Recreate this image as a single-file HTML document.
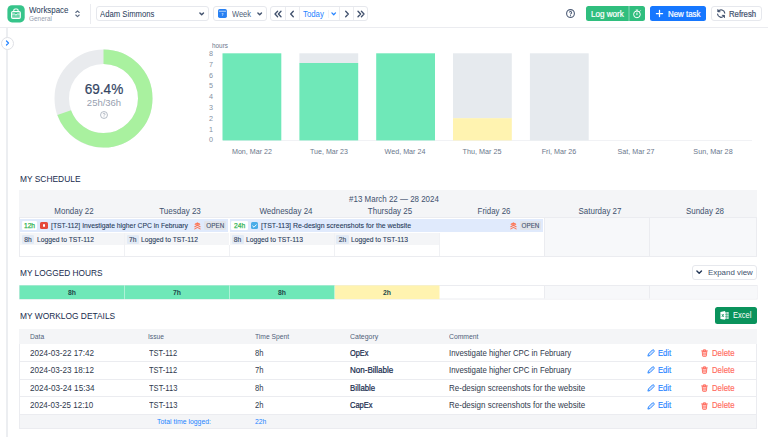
<!DOCTYPE html>
<html>
<head>
<meta charset="utf-8">
<style>
*{box-sizing:border-box;margin:0;padding:0}
html,body{width:768px;height:437px;overflow:hidden;background:#fff}
body{font-family:"Liberation Sans",sans-serif;color:#253858;position:relative;font-size:8px}
.abs{position:absolute}
.t{position:absolute;white-space:nowrap;line-height:1}
.btn{position:absolute;border:1px solid #e6e8ed;border-radius:3px;background:#fff}
.m{-webkit-text-stroke:.2px currentColor}
svg{position:absolute;overflow:visible}
/* header */
#hdr{position:absolute;left:0;top:0;width:768px;height:28px;border-bottom:1px solid #ebecf0;background:#fff}
/* sidebar */
#sideline{position:absolute;left:6px;top:28px;width:2px;height:409px;background:#eceef1}
#toggle{position:absolute;left:0.5px;top:36.5px;width:13px;height:13px;border-radius:50%;background:#fff;border:1px solid #dfe1e6}
.sec{font-size:8.25px;color:#172b4d}
.bar{position:absolute}
.xl{position:absolute;font-size:7.3px;color:#6b778c;white-space:nowrap;line-height:1}
.yl{position:absolute;font-size:7.2px;color:#8590a2;line-height:1;left:208px;width:6px;text-align:center}

.dh{top:206.8px;font-size:8.3px;color:#42526e}
.chip{top:220.8px;height:9.3px;background:#fff;border-radius:1.2px;font-size:6.7px;line-height:9.7px;text-align:center;color:#34b556;-webkit-text-stroke:.25px #34b556}
.tk{top:222.5px;font-size:6.8px;color:#253858;-webkit-text-stroke:.08px #253858}
.open{top:220.8px;height:9.2px;width:21.8px;background:#e1e4ea;border-radius:1.2px;font-size:6.3px;line-height:9.7px;text-align:center;color:#42526e;-webkit-text-stroke:.1px #42526e}
.lg{display:none}
.lh{top:234.5px;width:12.2px;height:9.5px;background:#e2eaf5;border-radius:1.2px;font-size:6.7px;line-height:9.8px;text-align:center;color:#3b4a66;-webkit-text-stroke:.15px #3b4a66}
.lt{top:236.5px;font-size:6.8px;color:#253858;-webkit-text-stroke:.08px #253858}
.lc{top:285.4px;height:14px;font-size:6.8px;line-height:16.2px;text-align:center;color:#1d4a4a;font-weight:bold}
.th{top:334px;font-size:6.9px;color:#505f79}
.td{font-size:8.8px;color:#303a4d}
.b{color:#172b4d;-webkit-text-stroke:.22px #172b4d}
</style>
</head>
<body>
<!-- HEADER -->
<div id="hdr">
  <svg style="left:0;top:0" width="30" height="28" viewBox="0 0 30 28"><rect x="7.4" y="5.2" width="17.3" height="17.2" rx="4.6" fill="#36c48a"/><rect x="11.6" y="14.2" width="8.7" height="4.1" fill="#fff" fill-opacity=".28"/><rect x="11.6" y="11.6" width="8.7" height="6.8" rx="1.2" fill="none" stroke="#fff" stroke-width="1.1"/><path d="M13.8 11.4V10.3a1.3 1.3 0 0 1 1.3-1.3h1.7a1.3 1.3 0 0 1 1.3 1.3v1.1" fill="none" stroke="#fff" stroke-width="1.1"/><path d="M11.6 14H14.5L15.95 15.1L17.4 14H20.3" fill="none" stroke="#fff" stroke-width="0.9"/></svg>
  <div class="t" style="transform:scale(0.9906,1.17);transform-origin:0 84.65%;left:29px;top:6.9px;font-size:8px;color:#253858">Workspace</div>
  <div class="t" style="transform:scale(0.9903,1.05);transform-origin:0 84.65%;left:29px;top:15.5px;font-size:6.5px;color:#97a0af">General</div>
  <svg style="left:75px;top:10.2px" width="5" height="7.5" viewBox="0 0 5 7.5"><path d="M0.8 2.5L2.5 0.9L4.2 2.5M0.8 5L2.5 6.6L4.2 5" fill="none" stroke="#5e6c84" stroke-width="1.1" stroke-linecap="round" stroke-linejoin="round"/></svg>
  <div class="abs" style="left:90px;top:4px;width:1px;height:20px;background:#ebecf0"></div>

  <div class="btn" style="left:96px;top:6px;width:112.5px;height:15.3px"></div>
  <div class="t" style="transform:scale(0.9827,1.17);transform-origin:0 84.65%;left:100.4px;top:10.7px;font-size:7.85px;color:#253858">Adam Simmons</div>
  <svg style="left:199px;top:11.6px" width="5.4" height="4" viewBox="0 0 5.4 4"><path d="M0.9 0.9L2.7 2.8L4.5 0.9" fill="none" stroke="#42526e" stroke-width="1.4" stroke-linecap="round" stroke-linejoin="round"/></svg>

  <div class="btn" style="left:213px;top:6px;width:53.7px;height:15.3px"></div>
  <svg style="left:215px;top:7px" width="14" height="14" viewBox="215 7 14 14"><rect x="218" y="9.1" width="8.9" height="8.9" rx="1.7" fill="#2880f2"/><path d="M219.3 11.25H225.6" stroke="#fff" stroke-opacity=".8" stroke-width="0.8" stroke-linecap="round"/><path d="M221.7 13.6H223.2L222.3 15.8" fill="none" stroke="#fff" stroke-opacity=".75" stroke-width="0.7"/></svg>
  <div class="t" style="transform:scale(0.9597,1.17);transform-origin:0 84.65%;left:232.2px;top:10.9px;font-size:7.8px;color:#505f79">Week</div>
  <svg style="left:257px;top:11.8px" width="5.4" height="4" viewBox="0 0 5.4 4"><path d="M0.9 0.9L2.7 2.8L4.5 0.9" fill="none" stroke="#42526e" stroke-width="1.4" stroke-linecap="round" stroke-linejoin="round"/></svg>

  <div class="btn" style="left:270.2px;top:6px;width:98.3px;height:15.3px"></div>
  <div class="abs" style="left:284.7px;top:7px;width:1px;height:13.3px;background:#ebecf0"></div>
  <div class="abs" style="left:299px;top:7px;width:1px;height:13.3px;background:#ebecf0"></div>
  <div class="abs" style="left:328px;top:10px;width:1px;height:7.5px;background:#f1f2f5"></div>
  <div class="abs" style="left:339px;top:7px;width:1px;height:13.3px;background:#ebecf0"></div>
  <div class="abs" style="left:353px;top:7px;width:1px;height:13.3px;background:#ebecf0"></div>
  <svg style="left:274px;top:10px" width="8" height="8" viewBox="0 0 8 8"><path d="M3.6 1.3L1 4L3.6 6.7M7 1.3L4.4 4L7 6.7" fill="none" stroke="#42526e" stroke-width="1.35" stroke-linecap="round" stroke-linejoin="round"/></svg>
  <svg style="left:289.2px;top:10px" width="6" height="8" viewBox="0 0 6 8"><path d="M4.3 1.3L1.7 4L4.3 6.7" fill="none" stroke="#42526e" stroke-width="1.35" stroke-linecap="round" stroke-linejoin="round"/></svg>
  <div class="t" style="transform:scale(0.9785,1.17);transform-origin:0 84.65%;left:303.4px;top:10.6px;font-size:8px;color:#2684ff">Today</div>
  <svg style="left:331px;top:12px" width="5.4" height="4" viewBox="0 0 5.4 4"><path d="M0.9 0.9L2.7 2.7L4.5 0.9" fill="none" stroke="#2684ff" stroke-width="1.3" stroke-linecap="round" stroke-linejoin="round"/></svg>
  <svg style="left:343.6px;top:10px" width="6" height="8" viewBox="0 0 6 8"><path d="M1.7 1.3L4.3 4L1.7 6.7" fill="none" stroke="#42526e" stroke-width="1.35" stroke-linecap="round" stroke-linejoin="round"/></svg>
  <svg style="left:357.2px;top:10px" width="8" height="8" viewBox="0 0 8 8"><path d="M1 1.3L3.6 4L1 6.7M4.4 1.3L7 4L4.4 6.7" fill="none" stroke="#42526e" stroke-width="1.35" stroke-linecap="round" stroke-linejoin="round"/></svg>

  <!-- right -->
  <svg style="left:566px;top:9px" width="9" height="9" viewBox="0 0 9 9"><circle cx="4.5" cy="4.5" r="3.9" fill="none" stroke="#505f79" stroke-width="1.1"/><path d="M3.4 3.6a1.1 1.1 0 1 1 1.6 1c-.4.2-.5.4-.5.8" fill="none" stroke="#505f79" stroke-width="1.05"/><circle cx="4.5" cy="6.6" r="0.55" fill="#505f79"/></svg>
  <div class="abs" style="left:585.6px;top:6px;width:59.4px;height:15.3px;border-radius:2.5px;background:#30be7e"></div>
  <div class="abs" style="left:628px;top:6px;width:2px;height:15.3px;background:#5ccb9b"></div>
  <div class="t m" style="transform:scale(1.0087,1.17);transform-origin:0 84.65%;left:591px;top:10.6px;font-size:8px;color:#fff">Log work</div>
  <svg style="left:630px;top:7px" width="14" height="14" viewBox="630 7 14 14"><circle cx="636.95" cy="14.4" r="3.35" fill="none" stroke="#fff" stroke-width="1"/><path d="M636.95 13V14.7M636.1 10.1h1.7M639.7 11.4l.6-.6" stroke="#fff" stroke-width="1" stroke-linecap="round"/></svg>

  <div class="abs" style="left:650px;top:6px;width:56px;height:15.3px;border-radius:2.5px;background:#1677ff"></div>
  <svg style="left:656.2px;top:10.2px" width="7" height="7" viewBox="0 0 7 7"><path d="M3.5 0.4V6.6M0.4 3.5H6.6" stroke="#fff" stroke-width="1.25" stroke-linecap="round"/></svg>
  <div class="t m" style="transform:scale(0.9877,1.17);transform-origin:0 84.65%;left:667.5px;top:10.6px;font-size:8px;color:#fff">New task</div>

  <div class="btn" style="left:711.4px;top:6px;width:50.3px;height:15.3px"></div>
  <svg style="left:714px;top:7px" width="14" height="14" viewBox="714 7 14 14"><g transform="translate(725.65 9.05) scale(-1 1)"><path d="M0.9 4A3.6 3.6 0 0 1 7.4 2.3M8.1 5A3.6 3.6 0 0 1 1.6 6.7" fill="none" stroke="#42526e" stroke-width="1.2" stroke-linecap="round"/><path d="M7.8 0.5V2.7H5.6M1.2 8.5V6.3H3.4" fill="#42526e" stroke="#42526e" stroke-width="0.9" stroke-linecap="round" stroke-linejoin="round"/></g></svg>
  <div class="t m" style="transform:scale(0.9804,1.17);transform-origin:0 84.65%;left:728.8px;top:10.6px;font-size:7.9px;color:#42526e">Refresh</div>
</div>

<!-- SIDEBAR -->
<div id="sideline"></div>
<div id="toggle"></div>
<svg style="left:5.2px;top:40px" width="5" height="6" viewBox="0 0 5 6"><path d="M1.5 1L3.5 3L1.5 5" fill="none" stroke="#2684ff" stroke-width="1.2" stroke-linecap="round" stroke-linejoin="round"/></svg>

<!-- DONUT -->
<svg style="left:53px;top:48px" width="101" height="101" viewBox="-50.5 -50.5 101 101">
  <circle cx="0" cy="0" r="41.75" fill="none" stroke="#e9ebee" stroke-width="14.5"/>
  <circle cx="0" cy="0" r="41.75" fill="none" stroke="#a9f19f" stroke-width="14.5" stroke-dasharray="182.05 262.32" transform="rotate(-90)"/>
</svg>
<div class="t" style="transform:translateX(-50%) scale(0.9697,1);transform-origin:50% 84.65%;left:103.5px;top:82.0px;font-size:14px;color:#344563;-webkit-text-stroke:.2px #344563">69.4%</div>
<div class="t" style="transform:translateX(-50%) scale(1.0205,1);transform-origin:50% 84.65%;left:103.5px;top:98.5px;font-size:9.3px;color:#97a0af">25h/36h</div>
<svg style="left:99.5px;top:110.5px" width="8" height="8" viewBox="0 0 9 9"><circle cx="4.5" cy="4.5" r="3.9" fill="none" stroke="#97a0af" stroke-width="0.8"/><path d="M3.4 3.6a1.1 1.1 0 1 1 1.6 1c-.4.2-.5.4-.5.8" fill="none" stroke="#97a0af" stroke-width="0.8"/><circle cx="4.5" cy="6.5" r="0.5" fill="#97a0af"/></svg>

<!-- BAR CHART -->
<div class="t" style="transform:scale(0.9135,1);transform-origin:0 84.65%;left:212px;top:42.0px;font-size:7px;color:#6b778c">hours</div>
<div class="yl" style="top:50px">8</div>
<div class="yl" style="top:60.8px">7</div>
<div class="yl" style="top:71.6px">6</div>
<div class="yl" style="top:82.4px">5</div>
<div class="yl" style="top:93.2px">4</div>
<div class="yl" style="top:104px">3</div>
<div class="yl" style="top:114.8px">2</div>
<div class="yl" style="top:125.6px">1</div>
<div class="yl" style="top:136.4px">0</div>
<div class="abs" style="left:223px;top:140px;width:529px;height:1px;background:#f1f2f5"></div>

<svg style="left:0;top:0" width="768" height="160" viewBox="0 0 768 160"><rect x="222.5" y="53.3" width="58.8" height="87.1" fill="#6fe8b8"/><rect x="299.4" y="53.3" width="58.8" height="10.1" fill="#e6eaee"/><rect x="299.4" y="63.0" width="58.8" height="77.4" fill="#6fe8b8"/><rect x="376.2" y="53.3" width="58.8" height="87.1" fill="#6fe8b8"/><rect x="453.0" y="53.3" width="58.8" height="65.1" fill="#e6eaee"/><rect x="453.0" y="118.2" width="58.8" height="22.2" fill="#fff3b0"/><rect x="529.9" y="53.3" width="58.8" height="87.1" fill="#e6eaee"/></svg>

<div class="xl" style="transform:translateX(-50%) scale(0.9788,1);transform-origin:50% 84.65%;left:251.8px;top:148.2px">Mon, Mar 22</div>
<div class="xl" style="transform:translateX(-50%) scale(0.9699,1);transform-origin:50% 84.65%;left:328.7px;top:148.2px">Tue, Mar 23</div>
<div class="xl" style="transform:translateX(-50%) scale(0.9798,1);transform-origin:50% 84.65%;left:404.9px;top:148.2px">Wed, Mar 24</div>
<div class="xl" style="transform:translateX(-50%) scale(0.9887,1);transform-origin:50% 84.65%;left:482.2px;top:148.2px">Thu, Mar 25</div>
<div class="xl" style="transform:translateX(-50%) scale(0.9807,1);transform-origin:50% 84.65%;left:559.1px;top:148.2px">Fri, Mar 26</div>
<div class="xl" style="transform:translateX(-50%) scale(0.9756,1);transform-origin:50% 84.65%;left:635.8px;top:148.2px">Sat, Mar 27</div>
<div class="xl" style="transform:translateX(-50%) scale(0.9887,1);transform-origin:50% 84.65%;left:712.7px;top:148.2px">Sun, Mar 28</div>

<!-- SCHEDULE -->
<div class="t sec" style="transform:scale(1.0176,1.17);transform-origin:0 84.65%;left:19.5px;top:176.0px">MY SCHEDULE</div>

<div class="abs" style="left:19px;top:190px;width:738px;height:66.5px;border:1px solid #ebecf0;background:#fff"></div>
<div class="abs" style="left:19px;top:190px;width:738px;height:28px;background:#f4f5f7;border-bottom:1px solid #ebecf0"></div>
<div class="t" style="transform:translateX(-50%) scale(1.0083,1.17);transform-origin:50% 84.65%;left:394.2px;top:196px;font-size:7.9px;color:#42526e">#13 March 22 — 28 2024</div>
<div class="t dh" style="transform:translateX(-50%) scale(0.9571,1.1);transform-origin:50% 84.65%;left:73.7px">Monday 22</div>
<div class="t dh" style="transform:translateX(-50%) scale(0.9684,1.1);transform-origin:50% 84.65%;left:180.2px">Tuesday 23</div>
<div class="t dh" style="transform:translateX(-50%) scale(0.9601,1.1);transform-origin:50% 84.65%;left:285.5px">Wednesday 24</div>
<div class="t dh" style="transform:translateX(-50%) scale(0.9604,1.1);transform-origin:50% 84.65%;left:390.4px">Thursday 25</div>
<div class="t dh" style="transform:translateX(-50%) scale(0.9481,1.1);transform-origin:50% 84.65%;left:494px">Friday 26</div>
<div class="t dh" style="transform:translateX(-50%) scale(0.9587,1.1);transform-origin:50% 84.65%;left:600px">Saturday 27</div>
<div class="t dh" style="transform:translateX(-50%) scale(0.9600,1.1);transform-origin:50% 84.65%;left:704.6px">Sunday 28</div>
<!-- weekend cols -->
<div class="abs" style="left:544px;top:218px;width:212px;height:38px;background:#f7f8fa"></div>
<div class="abs" style="left:544px;top:218px;width:1px;height:38px;background:#ebecf0"></div>
<div class="abs" style="left:649px;top:218px;width:1px;height:38px;background:#ebecf0"></div>
<!-- task rows -->
<div class="abs" style="left:20px;top:219px;width:208px;height:13px;background:#e0eafc"></div>
<div class="abs" style="left:230px;top:219px;width:313.4px;height:13px;background:#e0eafc"></div>
<div class="abs chip" style="left:22px;width:15px">12h</div>
<div class="abs" style="left:40px;top:221.7px;width:7.5px;height:7.5px;border-radius:1.5px;background:#e5493a"></div>
<div class="abs" style="left:42.6px;top:224.3px;width:2.4px;height:2.4px;border-radius:50%;background:#fff"></div>
<div class="t tk" style="transform:scale(0.9972,1.17);transform-origin:0 84.65%;left:50.5px">[TST-112] Investigate higher CPC in February</div>
<svg style="left:194.4px;top:221.6px" width="7" height="8" viewBox="0 0 7 8"><path d="M0.8 2.3L3.45 0.8L6.1 2.3Z" fill="#ff7452" stroke="#ff7452" stroke-width="0.8" stroke-linejoin="round"/><path d="M0.8 4.7L3.45 3.2L6.1 4.7M0.8 6.9L3.45 5.4L6.1 6.9" fill="none" stroke="#ff7452" stroke-width="1.05" stroke-linecap="round" stroke-linejoin="round"/></svg>
<div class="abs open" style="left:204.4px">OPEN</div>

<div class="abs chip" style="left:231.3px;width:16.8px">24h</div>
<div class="abs" style="left:251px;top:221.8px;width:7.1px;height:7.1px;border-radius:1.5px;background:#4bade8"></div>
<svg style="left:252.1px;top:223.5px" width="5" height="4" viewBox="0 0 5 4"><path d="M0.7 2L2 3.2L4.3 0.8" fill="none" stroke="#fff" stroke-width="0.95" stroke-linecap="round" stroke-linejoin="round"/></svg>
<div class="t tk" style="transform:scale(1.0222,1.17);transform-origin:0 84.65%;left:261px">[TST-113] Re-design screenshots for the website</div>
<svg style="left:509.7px;top:221.6px" width="7" height="8" viewBox="0 0 7 8"><path d="M0.8 2.3L3.45 0.8L6.1 2.3Z" fill="#ff7452" stroke="#ff7452" stroke-width="0.8" stroke-linejoin="round"/><path d="M0.8 4.7L3.45 3.2L6.1 4.7M0.8 6.9L3.45 5.4L6.1 6.9" fill="none" stroke="#ff7452" stroke-width="1.05" stroke-linecap="round" stroke-linejoin="round"/></svg>
<div class="abs open" style="left:519.6px">OPEN</div>
<!-- logged rows -->
<div class="abs" style="left:20px;top:233px;width:419.5px;height:12px;background:#f4f5f7"></div>
<div class="abs lh" style="left:21.8px">8h</div><div class="t lt" style="transform:scale(0.9917,1.17);transform-origin:0 84.65%;left:36.5px">Logged to TST-112</div>
<div class="abs lh" style="left:126.7px">7h</div><div class="t lt" style="transform:scale(0.9917,1.17);transform-origin:0 84.65%;left:141.2px">Logged to TST-112</div>
<div class="abs lh" style="left:231.5px">8h</div><div class="t lt" style="transform:scale(0.9917,1.17);transform-origin:0 84.65%;left:246px">Logged to TST-113</div>
<div class="abs lh" style="left:336.4px">2h</div><div class="t lt" style="transform:scale(0.9917,1.17);transform-origin:0 84.65%;left:351px">Logged to TST-113</div>
<!-- cell lines -->
<div class="abs" style="left:124px;top:233px;width:1px;height:23px;background:#f0f1f4"></div>
<div class="abs" style="left:229px;top:219px;width:1px;height:37px;background:#fff"></div>
<div class="abs" style="left:229px;top:245px;width:1px;height:11px;background:#f0f1f4"></div>
<div class="abs" style="left:334px;top:233px;width:1px;height:23px;background:#f0f1f4"></div>
<div class="abs" style="left:439px;top:233px;width:1px;height:23px;background:#f0f1f4"></div>

<!-- LOGGED HOURS -->
<div class="t sec" style="transform:scale(1.0072,1.17);transform-origin:0 84.65%;left:19.6px;top:269.6px">MY LOGGED HOURS</div>
<div class="btn" style="left:691.8px;top:265px;width:65.5px;height:14.5px"></div>
<svg style="left:696.3px;top:270.2px" width="6.4" height="4.4" viewBox="0 0 6.4 4.4"><path d="M0.9 0.9L3.2 3.3L5.5 0.9" fill="none" stroke="#253858" stroke-width="1.4" stroke-linecap="round" stroke-linejoin="round"/></svg>
<div class="t" style="transform:scale(0.9952,1);transform-origin:0 84.65%;left:708px;top:268.6px;font-size:7.95px;color:#42526e">Expand view</div>
<svg style="left:0;top:280px" width="768" height="24" viewBox="0 280 768 24">
<rect x="19.5" y="285.5" width="737.6" height="13.5" fill="#fff" stroke="#ebecf0" stroke-width="1"/>
<rect x="544.5" y="286" width="212.1" height="12.5" fill="#f7f8fa"/>
<rect x="19.5" y="285.4" width="105" height="13.7" fill="#6fe8b8"/>
<rect x="124.9" y="285.4" width="104.6" height="13.7" fill="#6fe8b8"/>
<rect x="229.9" y="285.4" width="104.6" height="13.7" fill="#6fe8b8"/>
<rect x="334.9" y="285.4" width="104.6" height="13.7" fill="#fff3b0"/>
<path d="M544.5 286V298.5M649.5 286V298.5" stroke="#ebecf0" stroke-width="1"/>
</svg>
<div class="abs lc" style="left:19.5px;width:105px">8h</div>
<div class="abs lc" style="left:124.5px;width:105px">7h</div>
<div class="abs lc" style="left:229.5px;width:105px">8h</div>
<div class="abs lc" style="left:334.5px;width:105px">2h</div>

<!-- WORKLOG -->
<div class="t sec" style="transform:scale(1.0163,1.17);transform-origin:0 84.65%;left:19.6px;top:312.9px">MY WORKLOG DETAILS</div>
<div class="abs" style="left:715px;top:307px;width:42px;height:17px;border-radius:2.5px;background:#0a935c"></div>
<svg style="left:720.2px;top:311px" width="9" height="9" viewBox="0 0 9 9"><rect x="5" y="1.1" width="3.7" height="6.9" rx="0.4" fill="#fff" fill-opacity=".8"/><path d="M6.7 1.1V8M5 3.4h3.7M5 5.7h3.7" stroke="#0a935c" stroke-width="0.45"/><path d="M0.4 0.9L5.1 0V8.8L0.4 7.9Z" fill="#fff"/><path d="M1.9 3.1L3.7 5.9M3.7 3.1L1.9 5.9" stroke="#0a935c" stroke-width="0.8"/></svg>
<div class="t" style="transform:scale(0.9904,1.17);transform-origin:0 84.65%;left:732.7px;top:312.2px;font-size:7.6px;color:#fff">Excel</div>
<div class="abs" style="left:19px;top:329px;width:738.3px;height:100px;border:1px solid #ebecf0;background:#fff"></div>
<div class="abs" style="left:19px;top:329px;width:738.3px;height:14.7px;background:#f4f5f7"></div>
<div class="t th" style="transform:scale(0.9682,1.17);transform-origin:0 84.65%;left:30px">Data</div>
<div class="t th" style="transform:scale(0.9645,1.17);transform-origin:0 84.65%;left:148.3px">Issue</div>
<div class="t th" style="transform:scale(0.9747,1.17);transform-origin:0 84.65%;left:254.5px">Time Spent</div>
<div class="t th" style="transform:scale(1.0083,1.17);transform-origin:0 84.65%;left:350px">Category</div>
<div class="t th" style="transform:scale(0.9874,1.17);transform-origin:0 84.65%;left:449px">Comment</div>
<div class="abs" style="left:20px;top:361px;width:736.3px;height:1px;background:#ebecf0"></div>
<div class="t td" style="transform:scale(0.9227,1.1);transform-origin:0 84.65%;left:30px;top:348.5px">2024-03-22 17:42</div><div class="t td" style="transform:scale(0.8521,1.1);transform-origin:0 84.65%;left:148.5px;top:348.5px">TST-112</div><div class="t td" style="transform:scale(0.8676,1.1);transform-origin:0 84.65%;left:254.5px;top:348.5px">8h</div><div class="t td b" style="transform:scale(0.8403,1.1);transform-origin:0 84.65%;left:349.8px;top:348.5px">OpEx</div><div class="t td" style="transform:scale(0.8893,1.1);transform-origin:0 84.65%;left:449px;top:348.5px">Investigate higher CPC in February</div><svg style="left:646.8px;top:348.7px" width="8" height="8" viewBox="0 0 8 8"><path d="M0.9 7.1L1.5 4.9L5.4 1a0.9 0.9 0 0 1 1.3 0l.3.3a0.9 0.9 0 0 1 0 1.3L3.1 6.5Z" fill="#d3e4ff" stroke="#2684ff" stroke-width="0.95" stroke-linejoin="round"/></svg><div class="t td" style="transform:scale(0.8634,1.1);transform-origin:0 84.65%;left:658.2px;top:348.5px;color:#2684ff;-webkit-text-stroke:.15px #2684ff">Edit</div><svg style="left:700.6px;top:348.7px" width="7" height="8" viewBox="0 0 7 8"><path d="M0.6 1.9h5.8M2.4 1.7V0.8h2.2v0.9" fill="none" stroke="#ff6b5e" stroke-width="0.95" stroke-linecap="round"/><path d="M1.25 2.5h4.5l-.3 4.3a.6.6 0 0 1-.6.55H2.15a.6.6 0 0 1-.6-.55Z" fill="#ffc4bf" stroke="#ff6b5e" stroke-width="0.9" stroke-linejoin="round"/><path d="M2.8 3.8V6M4.2 3.8V6" stroke="#ff6b5e" stroke-width="0.6"/></svg><div class="t td" style="transform:scale(0.8845,1.1);transform-origin:0 84.65%;left:712px;top:348.5px;color:#ff6b5e;-webkit-text-stroke:.15px #ff6b5e">Delete</div>
<div class="abs" style="left:20px;top:379px;width:736.3px;height:1px;background:#ebecf0"></div>
<div class="t td" style="transform:scale(0.9227,1.1);transform-origin:0 84.65%;left:30px;top:366.1px">2024-03-23 18:12</div><div class="t td" style="transform:scale(0.8521,1.1);transform-origin:0 84.65%;left:148.5px;top:366.1px">TST-112</div><div class="t td" style="transform:scale(0.8676,1.1);transform-origin:0 84.65%;left:254.5px;top:366.1px">7h</div><div class="t td b" style="transform:scale(0.9128,1.1);transform-origin:0 84.65%;left:349.8px;top:366.1px">Non-Billable</div><div class="t td" style="transform:scale(0.8893,1.1);transform-origin:0 84.65%;left:449px;top:366.1px">Investigate higher CPC in February</div><svg style="left:646.8px;top:366.3px" width="8" height="8" viewBox="0 0 8 8"><path d="M0.9 7.1L1.5 4.9L5.4 1a0.9 0.9 0 0 1 1.3 0l.3.3a0.9 0.9 0 0 1 0 1.3L3.1 6.5Z" fill="#d3e4ff" stroke="#2684ff" stroke-width="0.95" stroke-linejoin="round"/></svg><div class="t td" style="transform:scale(0.8634,1.1);transform-origin:0 84.65%;left:658.2px;top:366.1px;color:#2684ff;-webkit-text-stroke:.15px #2684ff">Edit</div><svg style="left:700.6px;top:366.3px" width="7" height="8" viewBox="0 0 7 8"><path d="M0.6 1.9h5.8M2.4 1.7V0.8h2.2v0.9" fill="none" stroke="#ff6b5e" stroke-width="0.95" stroke-linecap="round"/><path d="M1.25 2.5h4.5l-.3 4.3a.6.6 0 0 1-.6.55H2.15a.6.6 0 0 1-.6-.55Z" fill="#ffc4bf" stroke="#ff6b5e" stroke-width="0.9" stroke-linejoin="round"/><path d="M2.8 3.8V6M4.2 3.8V6" stroke="#ff6b5e" stroke-width="0.6"/></svg><div class="t td" style="transform:scale(0.8845,1.1);transform-origin:0 84.65%;left:712px;top:366.1px;color:#ff6b5e;-webkit-text-stroke:.15px #ff6b5e">Delete</div>
<div class="abs" style="left:20px;top:396px;width:736.3px;height:1px;background:#ebecf0"></div>
<div class="t td" style="transform:scale(0.9299,1.1);transform-origin:0 84.65%;left:30px;top:383.7px">2024-03-24 15:34</div><div class="t td" style="transform:scale(0.8582,1.1);transform-origin:0 84.65%;left:148.5px;top:383.7px">TST-113</div><div class="t td" style="transform:scale(0.8676,1.1);transform-origin:0 84.65%;left:254.5px;top:383.7px">8h</div><div class="t td b" style="transform:scale(0.8846,1.1);transform-origin:0 84.65%;left:349.8px;top:383.7px">Billable</div><div class="t td" style="transform:scale(0.9096,1.1);transform-origin:0 84.65%;left:449px;top:383.7px">Re-design screenshots for the website</div><svg style="left:646.8px;top:383.9px" width="8" height="8" viewBox="0 0 8 8"><path d="M0.9 7.1L1.5 4.9L5.4 1a0.9 0.9 0 0 1 1.3 0l.3.3a0.9 0.9 0 0 1 0 1.3L3.1 6.5Z" fill="#d3e4ff" stroke="#2684ff" stroke-width="0.95" stroke-linejoin="round"/></svg><div class="t td" style="transform:scale(0.8634,1.1);transform-origin:0 84.65%;left:658.2px;top:383.7px;color:#2684ff;-webkit-text-stroke:.15px #2684ff">Edit</div><svg style="left:700.6px;top:383.9px" width="7" height="8" viewBox="0 0 7 8"><path d="M0.6 1.9h5.8M2.4 1.7V0.8h2.2v0.9" fill="none" stroke="#ff6b5e" stroke-width="0.95" stroke-linecap="round"/><path d="M1.25 2.5h4.5l-.3 4.3a.6.6 0 0 1-.6.55H2.15a.6.6 0 0 1-.6-.55Z" fill="#ffc4bf" stroke="#ff6b5e" stroke-width="0.9" stroke-linejoin="round"/><path d="M2.8 3.8V6M4.2 3.8V6" stroke="#ff6b5e" stroke-width="0.6"/></svg><div class="t td" style="transform:scale(0.8845,1.1);transform-origin:0 84.65%;left:712px;top:383.7px;color:#ff6b5e;-webkit-text-stroke:.15px #ff6b5e">Delete</div>
<div class="abs" style="left:20px;top:414px;width:736.3px;height:1px;background:#ebecf0"></div>
<div class="t td" style="transform:scale(0.9112,1.1);transform-origin:0 84.65%;left:30px;top:401.3px">2024-03-25 12:10</div><div class="t td" style="transform:scale(0.8582,1.1);transform-origin:0 84.65%;left:148.5px;top:401.3px">TST-113</div><div class="t td" style="transform:scale(0.8676,1.1);transform-origin:0 84.65%;left:254.5px;top:401.3px">2h</div><div class="t td b" style="transform:scale(0.8559,1.1);transform-origin:0 84.65%;left:349.8px;top:401.3px">CapEx</div><div class="t td" style="transform:scale(0.9096,1.1);transform-origin:0 84.65%;left:449px;top:401.3px">Re-design screenshots for the website</div><svg style="left:646.8px;top:401.5px" width="8" height="8" viewBox="0 0 8 8"><path d="M0.9 7.1L1.5 4.9L5.4 1a0.9 0.9 0 0 1 1.3 0l.3.3a0.9 0.9 0 0 1 0 1.3L3.1 6.5Z" fill="#d3e4ff" stroke="#2684ff" stroke-width="0.95" stroke-linejoin="round"/></svg><div class="t td" style="transform:scale(0.8634,1.1);transform-origin:0 84.65%;left:658.2px;top:401.3px;color:#2684ff;-webkit-text-stroke:.15px #2684ff">Edit</div><svg style="left:700.6px;top:401.5px" width="7" height="8" viewBox="0 0 7 8"><path d="M0.6 1.9h5.8M2.4 1.7V0.8h2.2v0.9" fill="none" stroke="#ff6b5e" stroke-width="0.95" stroke-linecap="round"/><path d="M1.25 2.5h4.5l-.3 4.3a.6.6 0 0 1-.6.55H2.15a.6.6 0 0 1-.6-.55Z" fill="#ffc4bf" stroke="#ff6b5e" stroke-width="0.9" stroke-linejoin="round"/><path d="M2.8 3.8V6M4.2 3.8V6" stroke="#ff6b5e" stroke-width="0.6"/></svg><div class="t td" style="transform:scale(0.8845,1.1);transform-origin:0 84.65%;left:712px;top:401.3px;color:#ff6b5e;-webkit-text-stroke:.15px #ff6b5e">Delete</div>
<div class="abs" style="left:20px;top:415px;width:736.3px;height:13px;background:#f4f5f7"></div>
<div class="t" style="transform:scale(0.9841,1);transform-origin:0 84.65%;left:157px;top:418.2px;font-size:7px;color:#2684ff">Total time logged:</div>
<div class="t" style="transform:scale(0.9668,1);transform-origin:0 84.65%;left:254.5px;top:418.2px;font-size:7px;color:#2684ff">22h</div>
</body>
</html>
